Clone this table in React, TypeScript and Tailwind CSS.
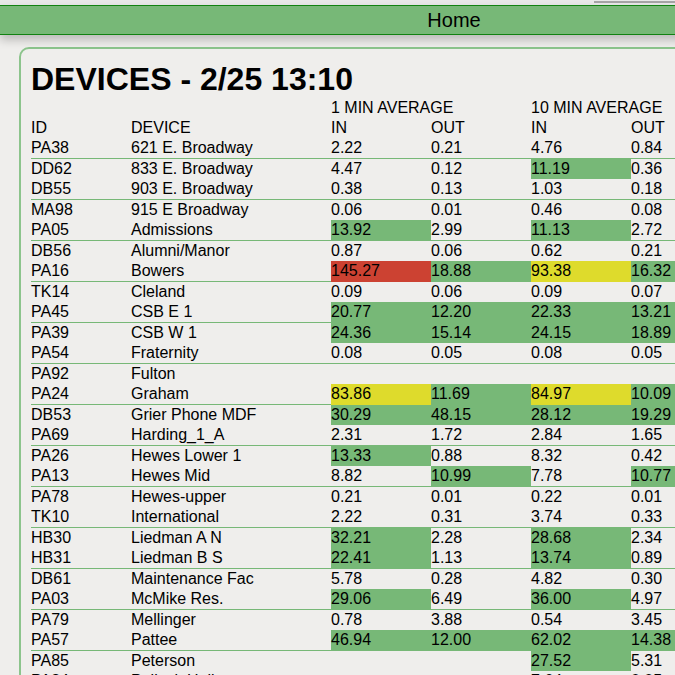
type Cell = string;

const rows: [string, string, Cell, Cell, Cell, Cell][] = [
  ["PA38", "621 E. Broadway", "2.22", "0.21", "4.76", "0.84"],
  ["DD62", "833 E. Broadway", "4.47", "0.12", "11.19", "0.36"],
  ["DB55", "903 E. Broadway", "0.38", "0.13", "1.03", "0.18"],
  ["MA98", "915 E Broadway", "0.06", "0.01", "0.46", "0.08"],
  ["PA05", "Admissions", "13.92", "2.99", "11.13", "2.72"],
  ["DB56", "Alumni/Manor", "0.87", "0.06", "0.62", "0.21"],
  ["PA16", "Bowers", "145.27", "18.88", "93.38", "16.32"],
  ["TK14", "Cleland", "0.09", "0.06", "0.09", "0.07"],
  ["PA45", "CSB E 1", "20.77", "12.20", "22.33", "13.21"],
  ["PA39", "CSB W 1", "24.36", "15.14", "24.15", "18.89"],
  ["PA54", "Fraternity", "0.08", "0.05", "0.08", "0.05"],
  ["PA92", "Fulton", "", "", "", ""],
  ["PA24", "Graham", "83.86", "11.69", "84.97", "10.09"],
  ["DB53", "Grier Phone MDF", "30.29", "48.15", "28.12", "19.29"],
  ["PA69", "Harding_1_A", "2.31", "1.72", "2.84", "1.65"],
  ["PA26", "Hewes Lower 1", "13.33", "0.88", "8.32", "0.42"],
  ["PA13", "Hewes Mid", "8.82", "10.99", "7.78", "10.77"],
  ["PA78", "Hewes-upper", "0.21", "0.01", "0.22", "0.01"],
  ["TK10", "International", "2.22", "0.31", "3.74", "0.33"],
  ["HB30", "Liedman A N", "32.21", "2.28", "28.68", "2.34"],
  ["HB31", "Liedman B S", "22.41", "1.13", "13.74", "0.89"],
  ["DB61", "Maintenance Fac", "5.78", "0.28", "4.82", "0.30"],
  ["PA03", "McMike Res.", "29.06", "6.49", "36.00", "4.97"],
  ["PA79", "Mellinger", "0.78", "3.88", "0.54", "3.45"],
  ["PA57", "Pattee", "46.94", "12.00", "62.02", "14.38"],
  ["PA85", "Peterson", "", "", "27.52", "5.31"],
  ["PA84", "Pollock Halls", "", "", "7.64", "0.05"],
];

// >100 red, >80 yellow, >10 green
function level(v: string) {
  const n = parseFloat(v);
  if (isNaN(n)) return "";
  if (n > 100) return "bg-[#cc4232]";
  if (n > 80) return "bg-[#dedb2c]";
  if (n > 10) return "bg-[#77b877]";
  return "";
}

const grid = "grid grid-cols-[100px_200px_100px_100px_100px_100px] w-[700px]";

export default function App() {
  return (
    <div
      className="w-[675px] h-[675px] overflow-hidden bg-[#efeeec] text-black"
      style={{ fontFamily: '"Liberation Sans", Arial, sans-serif' }}
    >
      <div className="h-[5px] bg-[#e8e8e8] pt-[1px]">
        <div className="ml-[594px] h-[2px] bg-[#a5a5a5]" />
      </div>
      <div className="relative z-10 h-[30px] w-[908px] border-y border-[#118211] bg-[#77b877] shadow-[0_5px_10px_rgba(0,0,0,0.22)] flex items-center justify-center">
        <span className="text-[20px] leading-none">Home</span>
      </div>

      <div className="pt-[12px] pl-[19px]">
        <div className="w-[900px] h-[700px] rounded-tl-[10px] border-2 border-[#8cc48c] pt-[12px] pl-[10px]">
          <h1 className="text-[32px] leading-[37px] font-bold">DEVICES - 2/25 13:10</h1>

          <div className="text-[16px] leading-[20px]">
            <div className={grid}>
              <div />
              <div />
              <div className="col-span-2">1 MIN AVERAGE</div>
              <div className="col-span-2">10 MIN AVERAGE</div>
            </div>
            <div className={grid}>
              <div>ID</div>
              <div>DEVICE</div>
              <div>IN</div>
              <div>OUT</div>
              <div>IN</div>
              <div>OUT</div>
            </div>

            {rows.map((r, i) => {
              const sep = i % 2 === 0;
              return (
                <div key={r[0]} className={grid}>
                  {r.map((c, j) => {
                    const bg = j >= 2 ? level(c) : "";
                    const border = sep
                      ? bg
                        ? "border-b border-transparent"
                        : "border-b border-[#77b877]"
                      : "";
                    return (
                      <div key={j} className={`whitespace-nowrap ${bg} ${border}`}>
                        {c || "\u00a0"}
                      </div>
                    );
                  })}
                </div>
              );
            })}
          </div>
        </div>
      </div>
    </div>
  );
}
